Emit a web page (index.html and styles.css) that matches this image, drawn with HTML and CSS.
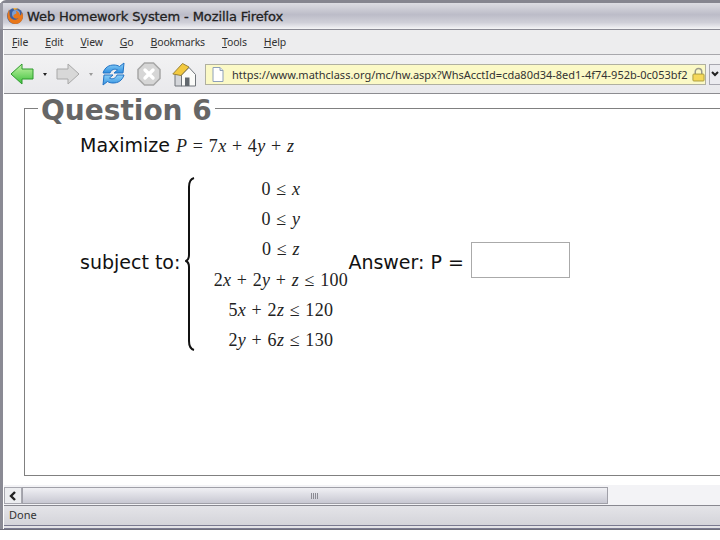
FILE: index.html
```html
<!DOCTYPE html>
<html lang="en">
<head>
<meta charset="utf-8">
<title>Web Homework System - Mozilla Firefox</title>
<link rel="stylesheet" href="styles.css">
</head>
<body>
<div class="window">
  <div class="titlebar">
    <svg class="logo" width="18" height="18" viewBox="0 0 18 18">
      <circle cx="9" cy="9" r="8" fill="#3d5f9e"/>
      <circle cx="10" cy="7" r="4" fill="#7fa0d0"/>
      <path d="M3 2c0 2-1 3-1.500 5-.8 5 3 10 8 10 4 0 7-3 7.500-7 .2-2-.5-4-1.500-5 .3 2-.5 3-1.500 3.500C13.500 6 12 4 9.500 3.500c1 1.500 1.500 3 0 3.500-2 .5-2.500 1.500-2 3 .5 1.500 3 2.500 5 1-1.500 2.500-6 2.500-8-.5C3 8 4 5 3 2z" fill="#e8771a"/>
      <path d="M7 1.200c2-.6 4 0 5.500 1-1.500-.2-3 0-4 .8z" fill="#f4b040"/>
    </svg>
    <span class="title-text">Web Homework System - Mozilla Firefox</span>
  </div>
  <div class="client">
    <div class="menubar">
      <span><u>F</u>ile</span><span><u>E</u>dit</span><span><u>V</u>iew</span><span><u>G</u>o</span><span><u>B</u>ookmarks</span><span><u>T</u>ools</span><span><u>H</u>elp</span>
    </div>
    <div class="toolbar">
      <svg class="tb-back" width="24" height="22" viewBox="0 0 24 22">
        <defs><linearGradient id="gb" x1="0" y1="0" x2="0" y2="1"><stop offset="0" stop-color="#c8f5a8"/><stop offset="1" stop-color="#3cc03c"/></linearGradient></defs>
        <path d="M1 11 12 1v5h11v10H12v5z" fill="url(#gb)" stroke="#2c9a2c" stroke-linejoin="round"/>
      </svg>
      <span class="drop dark"></span>
      <svg class="tb-fwd" width="24" height="22" viewBox="0 0 24 22">
        <path d="M23 11 12 1v5H1v10h11v5z" fill="#d8d8d8" stroke="#a8a8a8" stroke-linejoin="round"/>
      </svg>
      <span class="drop light"></span>
      <svg class="tb-reload" width="25" height="24" viewBox="0 0 25 24">
        <defs><linearGradient id="gr" x1="0" y1="0" x2="0" y2="1"><stop offset="0" stop-color="#8fd2f8"/><stop offset="1" stop-color="#2f8fe0"/></linearGradient></defs>
        <path d="M2 11C4 5 8 3 13 3c2 0 4 .5 5.500 1.500L23 1l-1 10h-9l3.500-3c-2-1.500-6-1-7.500 3z" fill="url(#gr)" stroke="#2273c4"/>
        <path d="M23 13c-2 6-6 8-11 8-2 0-4-.5-5.500-1.500L2 23l1-10h9l-3.500 3c2 1.500 6 1 7.500-3z" fill="url(#gr)" stroke="#2273c4"/>
      </svg>
      <svg class="tb-stop" width="24" height="24" viewBox="0 0 24 24">
        <path d="M7.500 1h9L23 7.500v9L16.500 23h-9L1 16.500v-9z" fill="#d6d6d6" stroke="#a6a6a6" stroke-width="1.500"/>
        <path d="M8 8l8 8M16 8l-8 8" stroke="#fff" stroke-width="3.400" stroke-linecap="round"/>
      </svg>
      <svg class="tb-home" width="25" height="25" viewBox="0 0 25 25">
        <path d="M3 12.500h7V24H3z" fill="#d4d6da" stroke="#70757a"/>
        <path d="M9.500 13 17 5.500l6.500 7V24h-14z" fill="#fbfbf9" stroke="#70757a"/>
        <path d="M13 24v-8.500h4.500V24z" fill="#62686e"/>
        <path d="M.8 12 10.500 1.500l6.500 3.500-8 8.500z" fill="#f3c93f" stroke="#9a8338" stroke-linejoin="round"/>
      </svg>
      <div class="urlbar">
        <svg class="page" width="12" height="15" viewBox="0 0 12 15"><path d="M1 .5h7l3 3v11H1z" fill="#fff" stroke="#8ea0b8"/><path d="M8 .5v3h3" fill="#dde5f0" stroke="#8ea0b8"/></svg>
        <span class="url">https://www.mathclass.org/mc/hw.aspx?WhsAcctId=cda80d34-8ed1-4f74-952b-0c053bf2</span>
        <svg class="lock" width="13" height="15" viewBox="0 0 14 15"><path d="M3.500 7V4.500a3.500 3.500 0 0 1 7 0V7" fill="none" stroke="#9a9a8c" stroke-width="1.600"/><rect x="1" y="7" width="12" height="7.500" rx="1" fill="#f5d85a" stroke="#a89a3c"/></svg>
      </div>
      <div class="url-go"><svg width="8" height="6" viewBox="0 0 8 6"><path d="M1 1l3 3 3-3" fill="none" stroke="#222" stroke-width="2"/></svg></div>
    </div>
    <div class="content">
      <fieldset class="question">
        <legend>Question 6</legend>
        <p class="objective">Maximize <span class="math"><i>P</i> = 7<i>x</i> + 4<i>y</i> + <i>z</i></span></p>
        <div class="problem">
          <span class="label">subject to:</span>
          <svg class="brace" width="10" height="174" viewBox="0 0 10 174">
            <path d="M9 1C5.500 2 4 5 4 10V78C4 81 3 83 1 84C3 85 4 87 4 90V164C4 169 5.500 172 9 173" fill="none" stroke="#111" stroke-width="2"/>
          </svg>
          <div class="constraints math">
            <div>0 ≤ <i>x</i></div>
            <div>0 ≤ <i>y</i></div>
            <div>0 ≤ <i>z</i></div>
            <div>2<i>x</i> + 2<i>y</i> + <i>z</i> ≤ 100</div>
            <div>5<i>x</i> + 2<i>z</i> ≤ 120</div>
            <div>2<i>y</i> + 6<i>z</i> ≤ 130</div>
          </div>
          <span class="label">Answer: P =</span>
          <input class="answer" type="text" aria-label="P">
        </div>
      </fieldset>
    </div>
    <div class="hscroll">
      <div class="sb-btn"><svg width="10" height="10" viewBox="0 0 10 10"><path d="M7 1 3 5l4 4" fill="none" stroke="#222" stroke-width="2.400"/></svg></div>
      <div class="sb-thumb"><span class="grip"></span></div>
    </div>
    <div class="status">Done</div>
  </div>
</div>
</body>
</html>
```
FILE: styles.css
```css
* { box-sizing: border-box; }
html, body { margin: 0; height: 100%; background: #fff; overflow: hidden; }
.window {
  width: 720px;
  height: 530px;
  display: flex;
  flex-direction: column;
  font-family: "DejaVu Sans", sans-serif;
  background: #fff;
  border-top: 3px solid #85858f;
  border-bottom: 1px solid #6e6e7a;
  border-radius: 6px 0 0 0;
}
.titlebar {
  height: 26px;
  flex: none;
  display: flex;
  align-items: center;
  gap: 3px;
  background: linear-gradient(#dcdce2 0, #bcbcc8 45%, #cfcfd8 75%, #f4f4f6 100%);
  border-left: 3px solid #9a9aa4;
  padding-left: 3px;
}
.title-text {
  font-family: "DejaVu Sans", sans-serif;
  font-size: 13px;
  -webkit-text-stroke: 0.300px #222;
  color: #222;
  letter-spacing: -0.100px;
  white-space: nowrap;
}
.client {
  flex: 1;
  min-height: 0;
  display: flex;
  flex-direction: column;
  border-left: 3px solid #8a8a94;
  border-top: 1px solid #8a8a94;
  padding-left: 1px;
  overflow: hidden;
}
.menubar {
  height: 25px;
  flex: none;
  display: flex;
  align-items: center;
  padding-left: 8px;
  gap: 17px;
  font-family: "Noto Sans", sans-serif;
  font-size: 10.500px;
  letter-spacing: -0.150px;
  color: #333;
  background: #ededee;
  border-bottom: 1px solid #a8a8ac;
}
.toolbar {
  height: 39px;
  flex: none;
  display: flex;
  align-items: center;
  padding-left: 6px;
  background: linear-gradient(#f2f2f3, #e9e9ec);
  border-bottom: 1px solid #8c8c90;
}
.toolbar > * { flex: none; }
.drop { width: 0; height: 0; border: 2.500px solid transparent; border-top: 3px solid #222; border-bottom: 0; margin-left: 9px; }
.drop.light { border-top-color: #9a9a9a; }
.tb-fwd { margin-left: 9px; }
.tb-reload { margin-left: 8px; }
.tb-stop { margin-left: 11px; }
.tb-home { margin-left: 11px; }
.urlbar {
  margin-left: 8px;
  width: 501px;
  height: 21px;
  display: flex;
  align-items: center;
  padding-left: 6px;
  background: #fbf9c6;
  border: 1px solid #b0b0a0;
}
.url {
  margin-left: 8px;
  font-family: "Noto Sans", sans-serif;
  font-size: 11px;
  color: #333;
  white-space: nowrap;
  width: 460px;
  overflow: hidden;
}
.page, .lock { flex: none; }
.url-go {
  margin-left: 3px;
  width: 12px;
  height: 21px;
  display: flex;
  align-items: center;
  justify-content: center;
  background: #ececf0;
  border: 1px solid #a8a8b0;
}
.content {
  height: 391px;
  flex: none;
  overflow: hidden;
  padding: 0 0 0 20px;
  background: #fff;
}
.question {
  margin: 0;
  width: 760px;
  height: 382px;
  padding: 0;
  border: 1px solid #808080;
  min-inline-size: 0;
}
.question legend {
  margin: 0 0 0 13px;
  padding: 0 3px;
  height: 28px;
  font-size: 28px;
  line-height: 34px;
  font-weight: bold;
  color: #666;
  white-space: nowrap;
}
.objective {
  margin: 11px 0 0 55px;
  font-size: 19px;
  line-height: 24px;
  color: #111;
}
.math {
  font-family: "Liberation Serif", serif;
  font-size: 18px;
  letter-spacing: 0.300px;
  word-spacing: 0.700px;
  color: #222;
  white-space: nowrap;
}
.problem {
  margin: 16px 0 0 55px;
  display: flex;
  align-items: center;
  color: #111;
}
.label { font-size: 19px; line-height: 24px; white-space: nowrap; margin-bottom: 5px; }
.brace { margin: 0 0 2px 5px; flex: none; }
.constraints {
  width: 153px;
  padding-left: 18px;
  text-align: center;
  display: grid;
  grid-auto-rows: 30.300px;
  align-items: center;
}
.answer {
  margin: 0 0 10px 7px;
  width: 99px;
  height: 36px;
  border: 1px solid #aaa;
  background: #fff;
  padding: 0;
}
.hscroll {
  height: 20px;
  flex: none;
  display: flex;
  align-items: stretch;
  padding: 2px 0 1px;
  background: #f3f3f6;
}
.sb-btn {
  width: 18px;
  display: flex;
  align-items: center;
  justify-content: center;
  background: #ecedf0;
  border: 1px solid #a8a8b0;
}
.sb-thumb {
  width: 586px;
  display: flex;
  align-items: center;
  justify-content: center;
  background: linear-gradient(#f0f0f4, #c8c8d2);
  border: 1px solid #a0a0a8;
}
.grip {
  width: 8px;
  height: 6px;
  background: repeating-linear-gradient(90deg, #8a8a92 0 1px, transparent 1px 2px);
}
.status {
  flex: 1;
  display: flex;
  align-items: center;
  padding: 0 0 3px 5px;
  font-family: "Noto Sans", sans-serif;
  font-size: 11px;
  color: #333;
  background: linear-gradient(#e4e4e8, #d4d4da);
  border-top: 1px solid #888890;
  border-bottom: 4px double #7a7a90;
}
```
